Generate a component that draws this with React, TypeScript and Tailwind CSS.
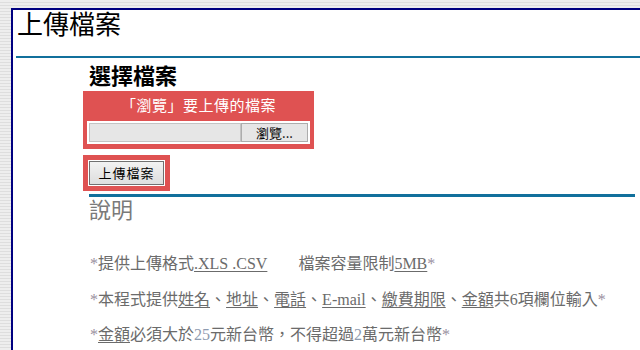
import React from "react";

const serif = { fontFamily: '"Liberation Serif", "Noto Sans CJK TC", serif' };

function Star() {
  return <span className="text-[#9a8fa0]">*</span>;
}

function U({ children }: { children: React.ReactNode }) {
  return <span className="underline decoration-1 underline-offset-2">{children}</span>;
}

export default function App() {
  return (
    <div className="w-[640px] h-[350px] overflow-hidden bg-[image:repeating-linear-gradient(180deg,#eeeeee_0px,#eeeeee_2px,#dedede_2px,#dedede_3px)] pt-[8px] pl-[11px]">
      <div className="w-[680px] h-[400px] bg-white border-t-2 border-l-2 border-[#000080]" style={serif}>
        <div className="pl-[4px] pt-[1px] text-[26px] leading-[30px] text-black">上傳檔案</div>
        <div className="ml-[3px] mt-[15px] h-[2px] bg-[#11709c]" />
        <div className="ml-[70px]">
          <div className="mt-[6px] pl-[6px] text-[22px] leading-[26px] font-bold text-black">選擇檔案</div>
          <div
            className="mt-[1px] w-[231px] bg-[#df5252] px-[4px] pt-[3px] pb-[5px]"
            style={{ fontFamily: '"Noto Sans CJK TC", sans-serif' }}
          >
            <div className="text-center text-white text-[15px] leading-[22px] tracking-[0.5px]">「瀏覽」要上傳的檔案</div>
            <div className="mt-[5px] bg-white p-[2px] flex">
              <div className="flex-1 h-[19px] bg-[#e6e6e6] border border-[#c4c4c4]" />
              <div className="w-[67px] h-[19px] bg-[#e6e6e6] border border-[#adadad] flex items-center justify-center text-[13px] leading-none text-black">
                瀏覽...
              </div>
            </div>
          </div>
          <div className="mt-[6px] w-[87px] border-[5px] border-[#df5252] bg-white p-[1px]">
            <div
              className="h-[24px] bg-[linear-gradient(#f2f2f2,#dddddd)] border border-[#707070] flex items-center justify-center text-[13px] text-black tracking-[1px]"
              style={{ fontFamily: '"Noto Sans CJK TC", sans-serif' }}
            >
              上傳檔案
            </div>
          </div>
          <div className="mt-[3px] ml-[6px] w-[546px] h-[3px] bg-[#11709c]" />
          <div className="mt-[1px] pl-[6px] text-[22px] leading-[26px] text-[#7a7a7a]">說明</div>
          <div className="pl-[7px] text-[16px] leading-[20px] text-[#6b6b6b]">
            <div className="mt-[30px]">
              <Star />提供上傳格式<U>.XLS .CSV</U>
              <span className="ml-[31px]">檔案容量限制</span>
              <U>5MB</U>
              <Star />
            </div>
            <div className="mt-[16px]">
              <Star />本程式提供<U>姓名</U>、<U>地址</U>、<U>電話</U>、<U>E-mail</U>、<U>繳費期限</U>、<U>金額</U>共6項欄位輸入<Star />
            </div>
            <div className="mt-[15px]">
              <Star /><U>金額</U>必須大於<span className="text-[#8e9bb0]">25</span>元新台幣，不得超過<span className="text-[#8e9bb0]">2</span>萬元新台幣<Star />
            </div>
          </div>
        </div>
      </div>
    </div>
  );
}
